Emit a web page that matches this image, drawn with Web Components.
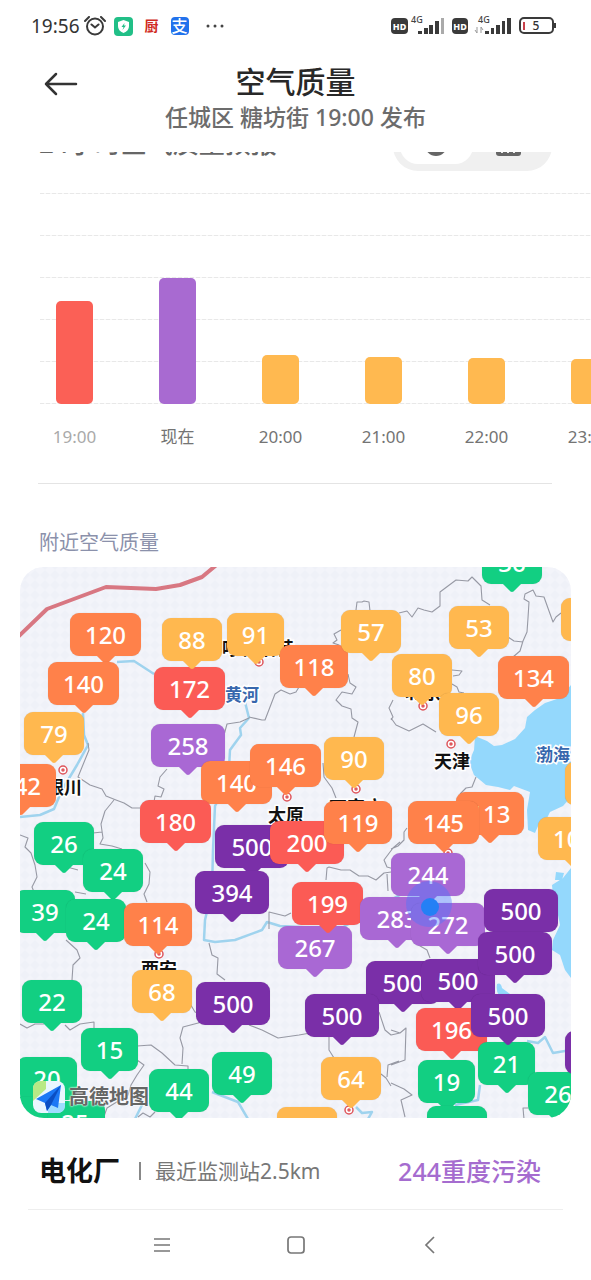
<!DOCTYPE html>
<html lang="zh-CN">
<head>
<meta charset="utf-8">
<meta name="viewport" content="width=device-width, initial-scale=1">
<title>空气质量</title>
<style>
  body { margin: 0; background: #fff; color: #2e2e2e; font-family: "Noto Sans", "Noto Sans CJK SC", sans-serif; }
</style>
</head>
<body>
<air-app></air-app>
<script>
const define = (name, html, setup) => {
  const tpl = document.createElement('template');
  tpl.innerHTML = html;
  customElements.define(name, class extends HTMLElement {
    constructor() {
      super();
      this.attachShadow({ mode: 'open' }).append(tpl.content.cloneNode(true));
    }
    connectedCallback() { if (setup) setup(this, this.shadowRoot); }
  });
};

define('status-bar', `
<style>
  :host { display: flex; align-items: center; justify-content: space-between; height: 52px; padding: 0 34px 0 31px; color: #333; }
  div { display: flex; align-items: center; }
  .left { gap: 8px; }
  time { font-size: 19px; line-height: 24px; font-weight: 400; margin-right: -4px; }
  .kitchen { font-size: 14px; line-height: 16px; font-weight: 700; color: #d02a22; margin: 0 4px; }
  .pay { width: 18px; height: 18px; border-radius: 4px; background: #2272ec; color: #fff; font-size: 16px; line-height: 18px; font-weight: 500; text-align: center; }
  .dots { margin-left: 8px; }
  .right { gap: 8px; }
  svg { display: block; }
  svg text { font-family: "Noto Sans", sans-serif; }
</style>
<div class="left">
  <time>19:56</time>
  <svg width="22" height="20" viewBox="0 0 22 20" fill="none" stroke="#3a3a3a" stroke-width="2"><circle cx="11" cy="10.500" r="8"/><path d="M1 5 5 1M17 1l4 4M7.500 8.500l3.500 3 3.500-3" stroke-linecap="round"/></svg>
  <svg width="19" height="20" viewBox="0 0 19 20"><rect y="1" width="19" height="19" rx="4" fill="#21bf87"/><path d="M9.500 4 15 6v4q0 5-5.500 7Q4 15 4 10V6Z" fill="#fff"/><path d="m10.500 7-3 4h2l-1 3 3.500-4.500h-2Z" fill="#21bf87"/></svg>
  <span class="kitchen">厨</span>
  <span class="pay">支</span>
  <svg class="dots" width="20" height="4" viewBox="0 0 20 4" fill="#444"><circle cx="3" cy="2" r="1.500"/><circle cx="10" cy="2" r="1.500"/><circle cx="17" cy="2" r="1.500"/></svg>
</div>
<div class="right">
  <svg width="53" height="20" viewBox="0 0 53 20"><rect y="2" width="17" height="16" rx="4" fill="#3a3a3a"/><text x="8.500" y="13.500" font-size="9" font-weight="800" fill="#fff" text-anchor="middle">HD</text><text x="20" y="7" font-size="9" font-weight="500" fill="#444">4G</text><path d="M27 15h4v3h-4zM33 12h4v6h-4zM38 9h4v9h-4zM44 5h4v13h-4z" fill="#3a3a3a"/><path d="M50 2h3v16h-3z" fill="#aaa"/></svg>
  <svg width="59" height="20" viewBox="0 0 59 20"><rect y="2" width="16" height="16" rx="4" fill="#3a3a3a"/><text x="8" y="13.500" font-size="9" font-weight="800" fill="#fff" text-anchor="middle">HD</text><text x="26" y="7" font-size="9" font-weight="500" fill="#444">4G</text><path d="m23 14 2 3v-6M29 17v-6l2 3" fill="none" stroke="#999"/><path d="M33 15h4v3h-4zM39 12h3v6h-3zM44 9h4v9h-4zM50 5h3v13h-3zM55 2h4v16h-4z" fill="#3a3a3a"/></svg>
  <svg width="38" height="20" viewBox="0 0 38 20"><rect x="1" y="2" width="33" height="15" rx="4" fill="none" stroke="#3a3a3a" stroke-width="2"/><path d="M36 7v5" stroke="#3a3a3a" stroke-width="2"/><path d="M5 6v8" stroke="#c8404a" stroke-width="2"/><text x="17" y="14" font-size="12" font-weight="500" fill="#333" text-anchor="middle">5</text></svg>
</div>`);

define('page-header', `
<style>
  :host { display: grid; grid-template-columns: 90px 1fr 90px; height: 100px; text-align: center; }
  button { border: 0; background: none; padding: 0; height: 64px; display: flex; align-items: center; padding-left: 44px; }
  h1 { margin: 11px 0 0; font-size: 30px; line-height: 38px; font-weight: 500; color: #282828; }
  p { margin: 0; font-size: 23px; line-height: 32px; font-weight: 500; color: #6c6c6c; white-space: nowrap; }
</style>
<button aria-label="返回"><svg width="34" height="24" viewBox="0 0 34 24" fill="none" stroke="#333" stroke-width="2.500" stroke-linecap="round" stroke-linejoin="round"><path d="M12 2 2 12l10 10M2 12h30"/></svg></button>
<div><h1><slot name="title"></slot></h1><p><slot></slot></p></div>`);

define('forecast-head', `
<style>
  :host { display: flex; align-items: flex-end; justify-content: space-between; height: 19px; overflow: hidden; padding: 0 39px; }
  h2 { margin: 0 0 11px; font-size: 26px; line-height: 34px; font-weight: 500; color: #666; white-space: nowrap; }
  .switch { display: flex; box-sizing: border-box; width: 159px; height: 50px; padding: 7px; border-radius: 25px; background: #f0f0f0; flex: none; }
  button { flex: 1; border: 0; padding: 0; border-radius: 18px; background: none; display: flex; align-items: center; justify-content: center; }
  .on { background: #fff; }
  svg { display: block; }
</style>
<h2><slot></slot></h2>
<div class="switch">
  <button class="on" aria-label="曲线"><svg width="24" height="20" viewBox="0 0 24 20"><circle cx="12" cy="9" r="11" fill="#666"/></svg></button>
  <button aria-label="柱状"><svg width="26" height="20" viewBox="0 0 26 20"><rect width="25" height="20" rx="3" fill="#666"/><path d="M6 17v-6M12 17V6M18 17V8" stroke="#eee" stroke-width="2"/></svg></button>
</div>`);

define('forecast-bar', `
<style>
  :host { display: flex; flex-direction: column; align-items: center; justify-content: flex-end; flex: 0 0 103px; }
  i { display: block; width: 37px; height: var(--h); border-radius: 5px; background: var(--c); }
  span { font-size: 17px; line-height: 24px; margin-top: 21px; white-space: nowrap; color: var(--t, #747474); }
</style>
<i></i><span><slot></slot></span>`);

define('forecast-chart', `
<style>
  :host { display: grid; margin-top: 22px; overflow: hidden; }
  .grid, .bars { grid-area: 1 / 1; }
  .grid { margin-left: 40px; height: 211px; display: flex; flex-direction: column; justify-content: space-between; }
  .grid b { height: 1px; background: repeating-linear-gradient(90deg, #e8e8e8 0 4px, #f8f8f8 4px 6px); }
  .bars { display: flex; min-width: 0; padding-left: 23px; height: 256px; }
</style>
<div class="grid"><b></b><b></b><b></b><b></b><b></b><b></b></div>
<div class="bars"><slot></slot></div>`);

define('aqi-pin', `
<style>
  :host { position: absolute; display: block; height: 43px; border-radius: 9px; background: var(--c); color: #fff; text-align: center; font-size: 24px; line-height: 43px; font-weight: 500; box-shadow: 0 0 1px rgba(0, 0, 0, .2); }
  svg { position: absolute; top: 42px; left: calc(50% - 10px); display: block; }
</style>
<slot></slot><svg width="20" height="10" viewBox="0 0 20 10"><path d="M0 0h20l-7 7q-3 4-6 0Z" fill="var(--c)"/></svg>`);

/* Stations projected on a 551-unit square, painted in order. */
const STATIONS = [
  ['36',462,-26,'g'],['64',541,31,'y'],['267',258,359,'p'],['172',134,100,'r'],['120',50,46,'o'],['88',142,51,'y'],
  ['91',207,46,'y'],['118',260,78,'o'],['57',321,43,'y'],['53',429,39,'y'],['80',372,87,'y'],['96',419,126,'y'],
  ['134',478,89,'o'],['140',28,95,'o'],['79',4,145,'y'],['258',131,157,'p'],['140',181,194,'o'],['146',230,177,'o'],
  ['90',304,170,'y'],['142',-35,197,'o'],['180',120,233,'r'],['26',14,255,'g'],['24',63,282,'g'],['39',-5,323,'g'],
  ['24',46,332,'g'],['114',104,336,'o'],['500',195,258,'v'],['394',175,304,'v'],['200',250,254,'r'],['119',304,234,'o'],
  ['199',272,315,'r'],['113',436,225,'o'],['145',388,234,'o'],['104',518,250,'y'],['70',545,195,'y'],['283',340,330,'p'],
  ['244',371,286,'p'],['272',391,336,'p'],['500',464,322,'v'],['500',346,394,'v'],['500',401,392,'v'],['500',458,365,'v'],
  ['19',398,493,'g'],['196',396,441,'r'],['21',458,475,'g'],['500',451,427,'v'],['26',508,505,'g'],['28',407,539,'g'],
  ['60',257,540,'y'],['500',545,464,'v'],['64',301,490,'y'],['500',285,427,'v'],['500',176,415,'v'],['49',192,485,'g'],
  ['44',129,502,'g'],['15',61,461,'g'],['68',112,403,'y'],['22',2,413,'g'],['20',-3,490,'g'],['25',25,534,'g'],['30',-33,530,'g']
];
const LEVELS = { g: '#12cf82', y: '#ffb84f', o: '#ff814a', r: '#fb5b55', p: '#a968d4', v: '#7a2fa8' };

define('air-map', `
<style>
  :host { display: block; position: relative; overflow: hidden; margin: 0 20px; aspect-ratio: 1; border-radius: 24px; background: #f3f4fa; }
  .base { display: block; width: 100%; height: 100%; }
  .base text { font-family: "Noto Sans CJK SC", sans-serif; font-size: 18px; font-weight: 700; fill: #111; stroke: #fff; stroke-width: 3px; paint-order: stroke; }
  .base .water { font-size: 17px; fill: #3767ad; }
  .here { position: absolute; left: 70%; top: 57%; width: 46px; height: 46px; display: block; }
  .brand { position: absolute; left: 13px; bottom: 5px; display: flex; align-items: center; gap: 4px; font-size: 20px; line-height: 32px; font-weight: 700; color: #666; text-shadow: 0 0 2px #fff, 0 0 2px #fff; }
</style>
<svg class="base" viewBox="20 567 551 551" aria-hidden="true">
  <defs><pattern id="dots" width="10" height="10" patternUnits="userSpaceOnUse"><path d="M5 0l5 5-5 5-5-5Z" fill="#eff1f8"/></pattern></defs>
  <rect x="20" y="567" width="551" height="551" fill="url(#dots)"/>
  <g fill="#94d8fc">
    <path d="M571 685 560 698 545 703 535 710 527 717 525 728 515 739 502 745 494 746 487 741 475 736 474 750 469 762 474 775 486 785 498 787 510 790 514 786 530 792 527 810 528 830 535 833 538 826 545 822 550 812 563 806 571 797Z"/>
    <path d="M571 868 563 878 552 885 553 896 557 910 560 925 553 940 552 950 560 955 565 970 571 978Z"/>
    <path d="M497 984q4-2 5 4l8 6-5 4q-10-2-8-14ZM556 872l8 1-2 7-7 0Z"/>
  </g>
  <g fill="none" stroke="#9fd3ee" stroke-width="2.500" stroke-linejoin="round">
    <path d="M117 662 134 661 154 674"/>
    <path d="M248 690 245 702 249 718 240 728 241 735 230 750 229 768 223 775 224 790 215 806 213 850 212 890 205 920 204 940 215 942 235 940 262 930 267 922 280 926 340 929 390 900 430 880 450 853"/>
    <path d="M83 713 84 735 88 745 77 765 62 790 54 809 40 815 20 817"/>
    <path d="M212 1092 238 1102 248 1119M356 1107 362 1113 372 1112 368 1119M135 1119 142 1105M527 1041 538 1043 545 1037 553 1053 571 1050M455 1105 478 1100 480 1085"/>
  </g>
  <g fill="none" stroke="#9799a4" stroke-width="1.100" stroke-linejoin="round">
    <path d="M356 610 357 602 362 602 364 601 369 602 370 611M341 630 334 634 337 640 333 643 339 645 338 652M348 674 350 683 356 687 352 694 342 692 336 700 342 706 351 709 352 718 358 722 354 737"/>
    <path d="M299 687 296 692 290 694 281 690 275 694 265 720 262 720 249 717M249 718 240 722 227 724 224 735M399 613 407 611 412 617 418 608 424 610 432 612 440 606 440 592 448 586 456 580 468 581 472 577 481 586 482 600 490 605"/>
    <path d="M561 613 556 617 553 622 549 611 544 597 536 596 533 590 525 594 524 599 529 602 528 618 527 632 523 641 520 651 513 657 514 662M508 637 514 641 523 642M391 718 396 725 409 731 423 724 436 732M452 670 462 671 459 675 453 676M452 684 457 687 459 692 464 693M393 700 389 708 393 717 391 720M476 777 472 787 466 788 460 794"/>
    <path d="M407 828 404 832 404 840 398 846 391 849M400 842 393 848 384 860 387 867 394 869M387 874 388 891M323 763 324 777 332 788 336 798M326 880 327 868 329 867 341 870 350 870 359 876 368 876 376 880 384 873 391 872"/>
    <path d="M88 743 89 750 78 777 90 785 102 789 106 796 116 800 124 803 132 808 140 808M114 800 105 811 101 824 103 838 100 844 112 846 122 849M93 833 102 832M145 863 150 872 149 884 144 894 147 902M167 769 160 777 158 786 164 789 161 797 155 796 154 802M20 835 28 838 25 847 31 853 35 865 37 877 32 887 34 892M67 867 78 870M75 892 86 894M66 940 77 950 80 958 73 965 72 980M20 1024 27 1028 35 1024 44 1024M65 1025 70 1030 80 1024 94 1022 94 1029M137 1046 151 1045 162 1053 175 1065 188 1066 188 1070M202 1022 183 1027 180 1038 183 1048 182 1064M137 1060 144 1065 137 1075 131 1085 128 1095 107 1108 103 1119M138 1117 143 1113 150 1117 155 1112"/>
    <path d="M189 1002 195 1012 200 1014M209 943 212 955 218 958 217 974 225 980M249 1025 262 1030 278 1038 299 1035 316 1032M329 1037 329 1050 334 1058M269 929 269 912 285 916 291 913M391 1030 400 1033 406 1028 405 1060 391 1065M391 1083 404 1089 412 1095 401 1100 405 1117M381 1074 386 1078 391 1086M399 1061 388 1065 387 1077M379 1012 385 1030 391 1035 400 1033M415 943 427 950 430 958M524 1119 523 1108 528 1108"/>
  </g>
  <path d="M18 637 47 609 106 587 156 589 180 585 202 577 220 562" fill="none" stroke="#d87782" stroke-width="4" stroke-linejoin="round"/>
  <g id="rings" fill="#fff" stroke="#de555b" stroke-width="1.500"></g>
  <text x="222" y="655">呼和浩特</text><text x="405" y="699">北京</text><text x="434" y="768">天津</text>
  <text x="46" y="794">银川</text><text x="268" y="822">太原</text><text x="329" y="814">石家庄</text><text x="141" y="976">西安</text>
  <text class="water" x="225" y="701">黄河</text><text class="water" x="536" y="761">渤海</text>
</svg>
<div id="pins"></div>
<svg class="here" viewBox="0 0 46 46" aria-hidden="true"><circle cx="23" cy="23" r="23" fill="#4778ff" fill-opacity=".4"/><circle cx="24" cy="26" r="9" fill="#2480f5"/></svg>
<div class="brand"><svg width="32" height="32" viewBox="0 0 32 32"><rect width="32" height="32" rx="8" fill="#e8f6ff"/><path d="M0 20V8Q0 0 8 0h5v8Z" fill="#b8e986"/><path d="M15 32h9q8 0 8-8v-2H15Z" fill="#9edcff"/><path d="M28 4 3 18l9 4 2 8 4-6 7 3Z" fill="#1c78f5"/><path d="M28 4 12 22l2 8 4-6Z" fill="#0b4fc4"/></svg><span>高德地图</span></div>`,
(host, root) => {
  const rings = [[63,770],[259,662],[423,706],[451,744],[287,797],[356,789],[159,954],[448,853],[349,1110]];
  root.getElementById('rings').innerHTML = rings.map(([x, y]) =>
    `<circle cx="${x}" cy="${y}" r="4"/><circle cx="${x}" cy="${y}" r="1"/>`).join('');
  root.getElementById('pins').innerHTML = STATIONS.map(([v, x, y, c]) => {
    const width = (v.length === 3 ? 74 : 60) - 3 * (v.split('1').length - 1);
    return `<aqi-pin style="left:calc(100% * ${x} / 551);top:calc(100% * ${y} / 551);width:${width}px;--c:${LEVELS[c]}">${v}</aqi-pin>`;
  }).join('');
});

define('station-row', `
<style>
  :host { display: flex; align-items: center; height: 92px; margin: 0 28px; padding: 14px 22px 0 11px; box-sizing: border-box; border-bottom: 1px solid #eee; white-space: nowrap; }
  strong { font-size: 27px; line-height: 36px; font-weight: 700; color: #111; }
  hr { width: 2px; height: 18px; margin: 0 14px 0 19px; border: 0; background: #888; }
  span { font-size: 21px; line-height: 28px; color: #777; }
  em { margin-left: auto; font-style: normal; font-size: 25px; line-height: 32px; font-weight: 500; color: #a56ccf; }
</style>
<strong><slot name="name"></slot></strong><hr><span><slot></slot></span><em><slot name="level"></slot></em>`);

define('nav-bar', `
<style>
  :host { display: flex; justify-content: center; gap: 86px; height: 70px; align-items: center; }
  button { border: 0; background: none; padding: 0; width: 48px; height: 40px; display: flex; align-items: center; justify-content: center; }
  svg { fill: none; stroke: #777; stroke-width: 1.700; }
</style>
<button aria-label="菜单"><svg width="20" height="20"><path d="M2 4h16M2 10h16M2 16h16"/></svg></button>
<button aria-label="主页"><svg width="20" height="20"><rect x="2" y="2" width="16" height="16" rx="3"/></svg></button>
<button aria-label="返回"><svg width="20" height="20"><path d="m14 2-8 8 8 8"/></svg></button>`);

define('air-app', `
<style>
  :host { display: block; overflow: hidden; }
  hr { margin: 34px 39px 0 38px; border: 0; height: 1px; background: #e4e4e4; }
  h3 { margin: 45px 39px 10px; font-size: 20px; line-height: 28px; font-weight: 400; color: #8b91ab; }
</style>
<status-bar></status-bar>
<page-header><span slot="title">空气质量</span>任城区 糖坊街 19:00 发布</page-header>
<forecast-head>24小时空气质量预报</forecast-head>
<forecast-chart>
  <forecast-bar style="--h:103px;--c:#fb6056;--t:#aaa">19:00</forecast-bar>
  <forecast-bar style="--h:126px;--c:#a86ad1">现在</forecast-bar>
  <forecast-bar style="--h:49px;--c:#ffb950">20:00</forecast-bar>
  <forecast-bar style="--h:47px;--c:#ffb950">21:00</forecast-bar>
  <forecast-bar style="--h:46px;--c:#ffb950">22:00</forecast-bar>
  <forecast-bar style="--h:45px;--c:#ffb950">23:00</forecast-bar>
</forecast-chart>
<hr>
<h3>附近空气质量</h3>
<air-map></air-map>
<station-row><span slot="name">电化厂</span>最近监测站2.5km<span slot="level">244重度污染</span></station-row>
<nav-bar></nav-bar>`);
</script>
</body>
</html>
